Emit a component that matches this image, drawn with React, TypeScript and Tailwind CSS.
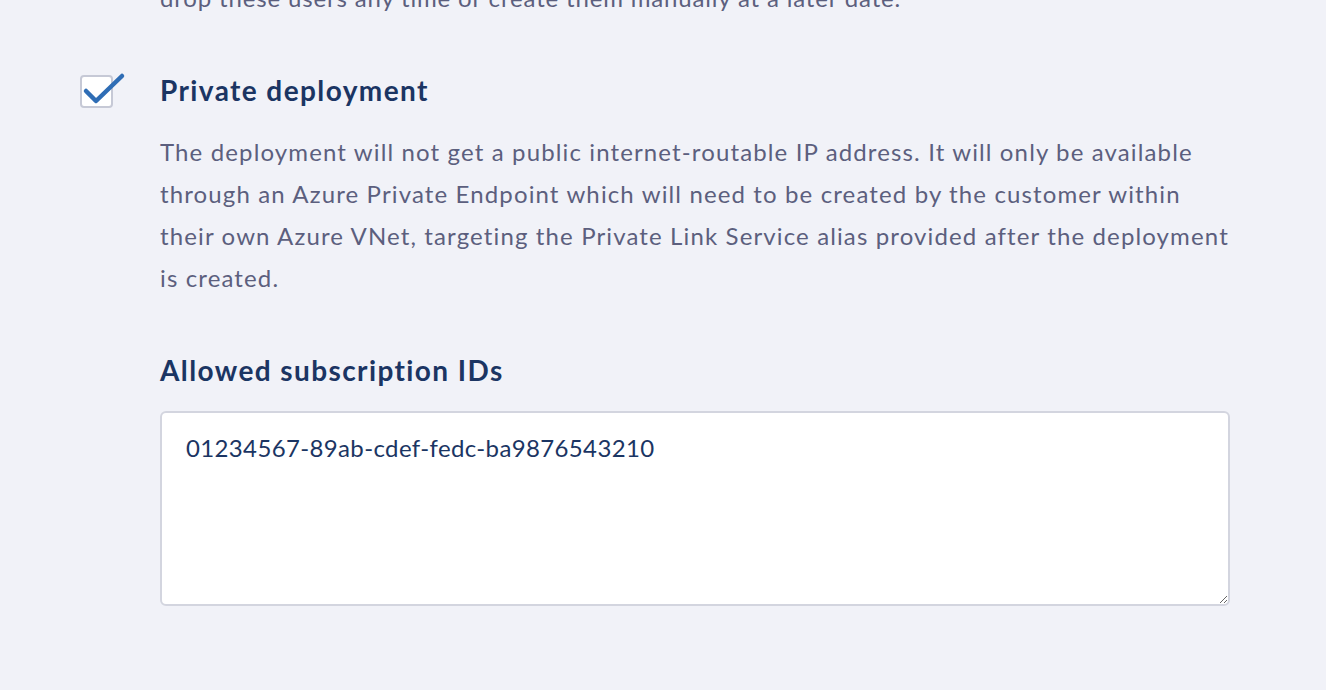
const font = { fontFamily: 'Lato, "Noto Sans", sans-serif' };

function Checkbox() {
    return (
        <div className="relative w-[33px] h-[33px] shrink-0 mt-[5px]">
            <div className="w-full h-full rounded-[4px] border-2 border-[#c6c9d6] bg-white" />
            <svg
                className="absolute left-[2px] top-[-4px]"
                width="44"
                height="36"
                viewBox="0 0 44 36"
                fill="none"
            >
                <path
                    d="M4 20 L14 30 L40 5"
                    stroke="#2f6db5"
                    strokeWidth="4.5"
                    strokeLinecap="round"
                    strokeLinejoin="round"
                />
            </svg>
        </div>
    );
}

export default function App() {
    return (
        <div
            className="min-h-screen w-full bg-[#f1f2f8] overflow-hidden"
            style={font}
        >
            <div className="pl-[160px] pr-[96px] mt-[-23px]">
                <p className="text-[24px] leading-[42px] tracking-[0.035em] text-[#5c5f7e]">
                    drop these users any time or create them manually at a later date.
                </p>
            </div>
            <div className="flex gap-[47px] pl-[80px] pr-[96px] mt-[51px]">
                <Checkbox />
                <div className="flex-1">
                    <h3 className="text-[28px] leading-[40px] font-bold tracking-[0.05em] text-[#1b3563]">
                        Private deployment
                    </h3>
                    <p className="mt-[21px] text-[24px] leading-[42px] tracking-[0.047em] text-[#5c5f7e]">
                        The deployment will not get a public internet-routable IP address. It
                        will only be available through an Azure Private Endpoint which will
                        need to be created by the customer within their own Azure VNet,
                        targeting the Private Link Service alias provided after the deployment
                        is created.
                    </p>
                    <h3 className="mt-[51px] text-[28px] leading-[40px] font-bold tracking-[0.05em] text-[#1b3563]">
                        Allowed subscription IDs
                    </h3>
                    <textarea
                        className="mt-[21px] block w-full h-[195px] rounded-[6px] border-2 border-[#d3d5df] bg-white px-[24px] py-[18px] text-[24px] leading-[34px] tracking-[0.015em] text-[#1b3563] outline-none"
                        style={font}
                        defaultValue="01234567-89ab-cdef-fedc-ba9876543210"
                    />
                </div>
            </div>
        </div>
    );
}
